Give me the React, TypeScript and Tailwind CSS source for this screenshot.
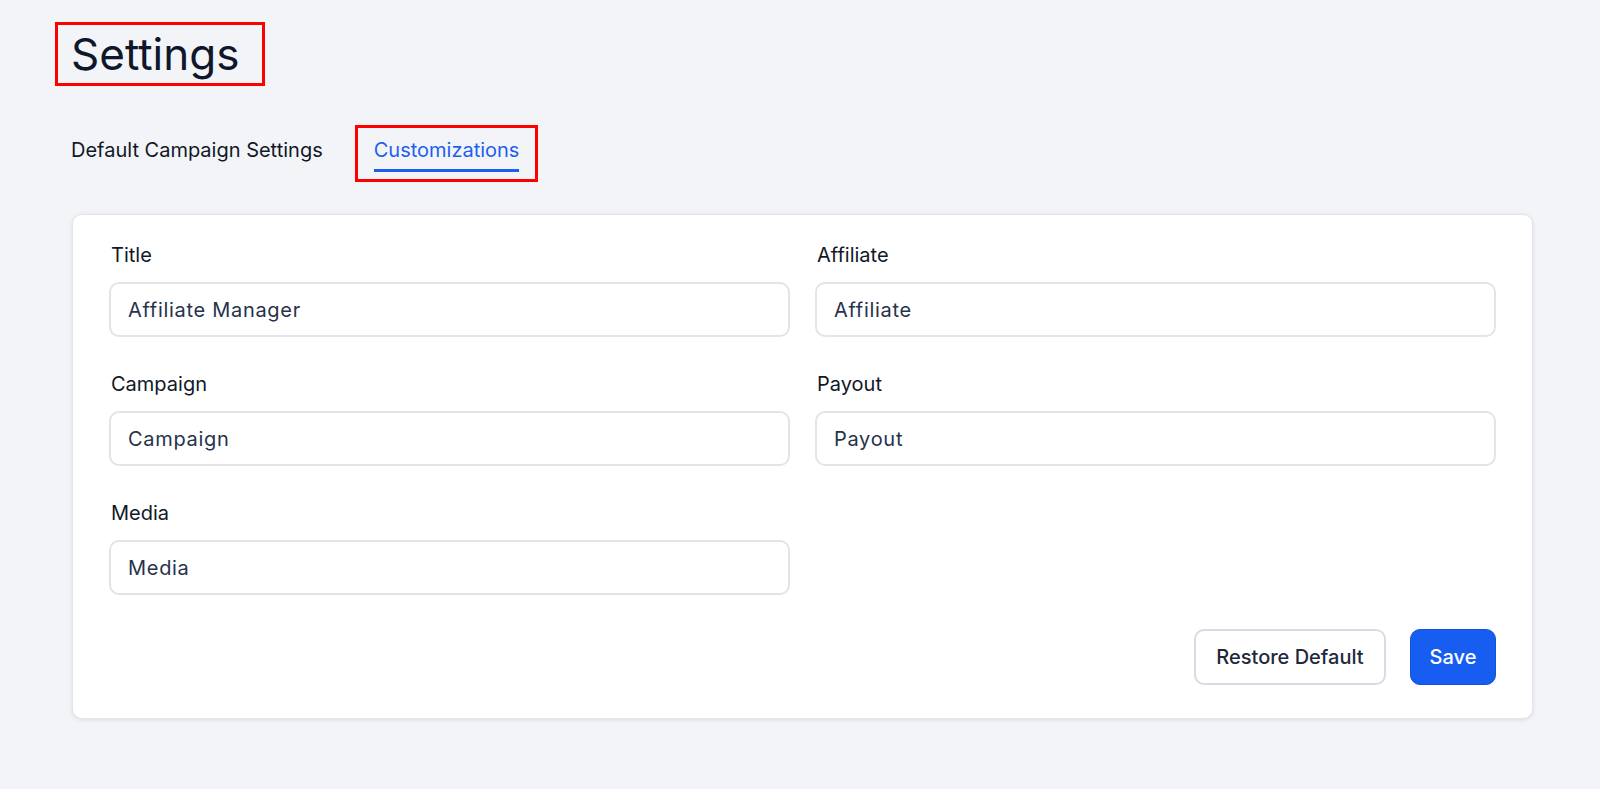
import React from 'react'

const fields = [
  { label: 'Title', value: 'Affiliate Manager' },
  { label: 'Affiliate', value: 'Affiliate' },
  { label: 'Campaign', value: 'Campaign' },
  { label: 'Payout', value: 'Payout' },
  { label: 'Media', value: 'Media' },
]

export default function App() {
  return (
    <div
      className="min-h-screen bg-[#f3f4f8] pl-[72px] pr-[67px] pt-[22px] pb-10"
      style={{ fontFamily: 'Inter, "Noto Sans", sans-serif' }}
    >
      <div className="-ml-[17px] flex h-[64px] w-[210px] items-center border-[3px] border-[#ff0000] pl-[13px]">
        <h1 className="text-[44px] leading-[58px] font-normal text-[#0f172a]">Settings</h1>
      </div>

      <div className="-ml-[17px] mt-[39px] flex items-start gap-4">
        <div className="border-[3px] border-transparent pl-[13px] pr-[13px] pt-[10px] pb-[7px]">
          <div className="text-[20px] leading-6 text-[#111827]">Default Campaign Settings</div>
          <div className="mt-[7px] h-[3px]" />
        </div>
        <div className="border-[3px] border-[#ff0000] pl-4 pr-4 pt-[10px] pb-[7px]">
          <div className="text-[20px] leading-6 text-[#1f5ff0]">Customizations</div>
          <div className="mt-[7px] h-[3px] bg-[#1f5ff0]" />
        </div>
      </div>

      <div className="mt-[32px] rounded-[10px] border border-[#e3e5ea] bg-white px-[36px] pt-[28px] pb-[33px] shadow-[0_1px_4px_rgba(15,23,42,0.10)]">
        <div className="grid grid-cols-2 gap-x-[25px] gap-y-[35px]">
          {fields.map(f => (
            <div key={f.label}>
              <label className="block pl-[2px] text-[20px] leading-6 text-[#111827]">{f.label}</label>
              <input
                defaultValue={f.value}
                className="mt-[15px] block h-[55px] w-full rounded-[10px] border-2 border-[#e2e4ea] bg-white pl-[17px] text-[20px] tracking-[0.7px] text-[#27324b] outline-none"
              />
            </div>
          ))}
        </div>
        <div className="mt-[34px] flex justify-end gap-[24px]">
          <button className="h-[56px] w-[192px] rounded-[10px] border-2 border-[#d7dbe3] bg-white text-[20px] font-medium text-[#1e293b]">
            Restore Default
          </button>
          <button className="h-[56px] w-[86px] rounded-[10px] border border-[#1452d8] bg-[#175df2] text-[20px] font-medium text-white">
            Save
          </button>
        </div>
      </div>
    </div>
  )
}
